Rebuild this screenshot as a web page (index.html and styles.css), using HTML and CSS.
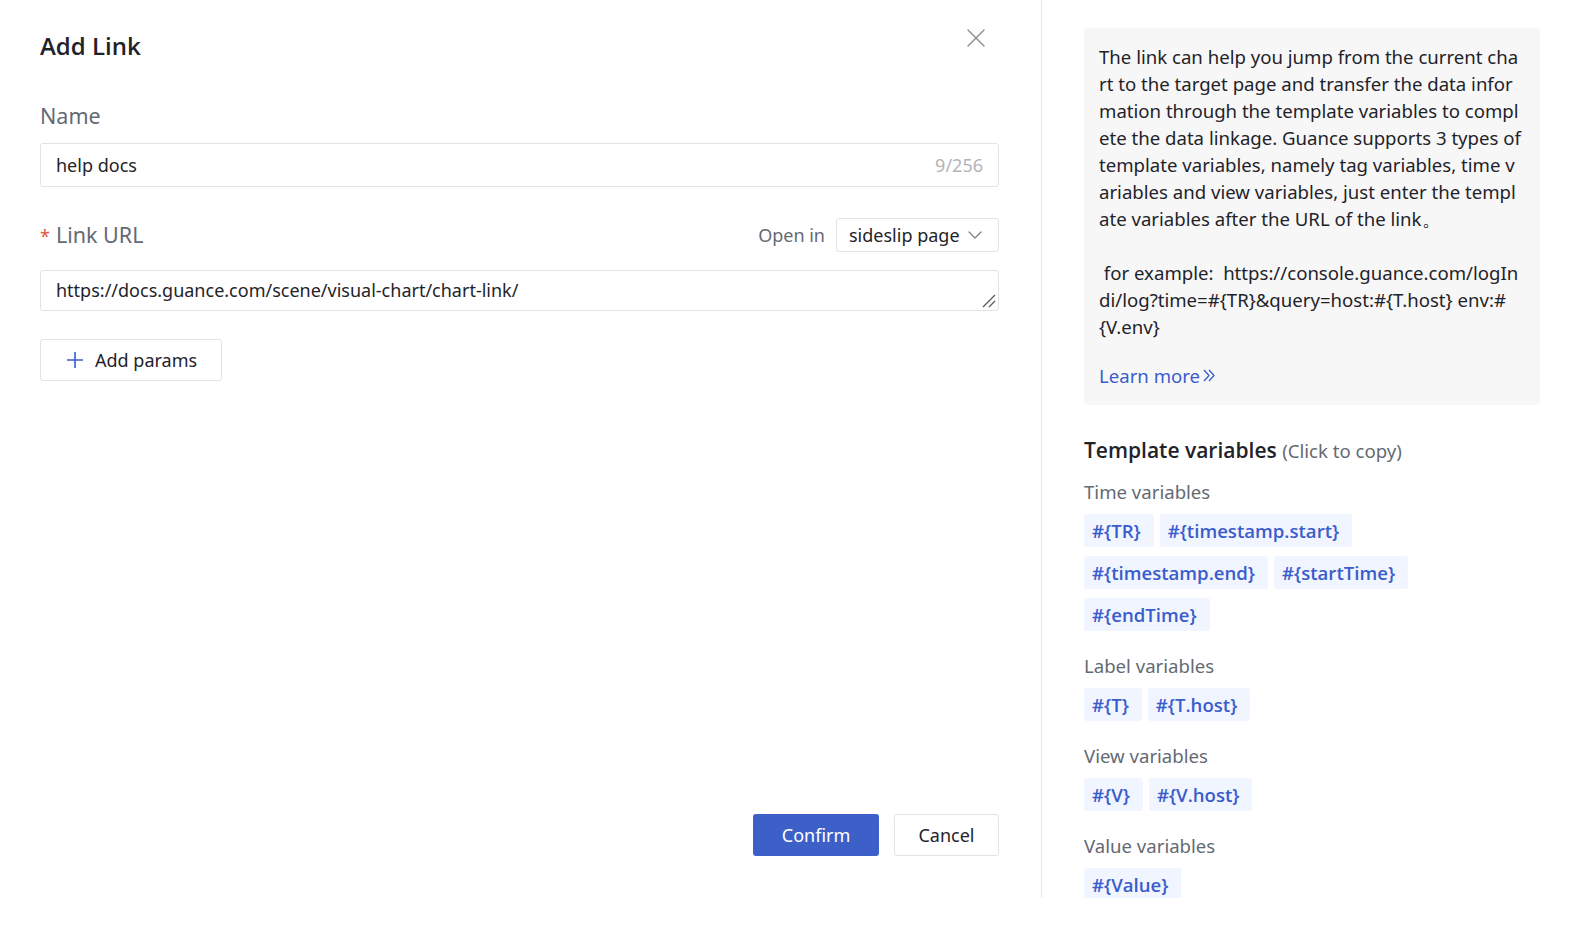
FILE: index.html
```html
<!DOCTYPE html>
<html lang="en">
  <head>
    <meta charset="UTF-8" />
    <meta name="viewport" content="width=device-width, initial-scale=1.0" />
    <title>Add Link</title>
    <link rel="stylesheet" href="styles.css">
  </head>
  <body>
    <div class="link-dialog">
      <!-- Form side -->
      <div class="form-side">
        <div class="form-header">
          <h2 class="form-title">Add Link</h2>
          <button class="close-button" type="button">
            <svg width="18" height="18" viewBox="0 0 18 18" fill="none" stroke="currentColor">
              <path stroke-width="1.4" stroke-linecap="round" d="M1 1L17 17M17 1L1 17" />
            </svg>
          </button>
        </div>

        <div class="form-body">
          <label class="field-label" for="link-name">Name</label>
          <div class="text-input">
            <input type="text" id="link-name" value="help docs" />
            <span class="counter">9/256</span>
          </div>

          <div class="url-row">
            <label class="field-label" for="link-url"><span class="required">*</span>Link URL</label>
            <div class="open-in">
              <span class="open-in-label">Open in</span>
              <div class="select">
                <span>sideslip page</span>
                <svg width="14" height="8" viewBox="0 0 14 8" fill="none" stroke="currentColor">
                  <path stroke-width="1.3" stroke-linecap="round" stroke-linejoin="round" d="M1 1l6 6 6-6" />
                </svg>
              </div>
            </div>
          </div>
          <div class="url-field">
            <textarea id="link-url" class="url-input" rows="1">https://docs.guance.com/scene/visual-chart/chart-link/</textarea>
            <svg class="resize-grip" width="14" height="14" viewBox="0 0 14 14" stroke="#5f5f5f">
              <path stroke-width="1.4" d="M13 1L1 13M13 7L7 13" />
            </svg>
          </div>

          <button class="btn btn-add" type="button">
            <svg width="16" height="16" viewBox="0 0 16 16" fill="none" stroke="currentColor">
              <path stroke-width="1.6" d="M8 0V16M0 8H16" />
            </svg>
            Add params
          </button>
        </div>

        <div class="form-actions">
          <button class="btn btn-primary" type="button">Confirm</button>
          <button class="btn btn-secondary" type="button">Cancel</button>
        </div>
      </div>

      <!-- Help side -->
      <div class="help-side">
        <div class="help-box">
          <p>The link can help you jump from the current chart to the target page and transfer the data information through the template variables to complete the data linkage. Guance supports 3 types of template variables, namely tag variables, time variables and view variables, just enter the template variables after the URL of the link。</p>
          <p>&nbsp;for example:&nbsp; https://console.guance.com/logIndi/log?time=#{TR}&amp;query=host:#{T.host} env:#{V.env}</p>
          <a class="learn-more" href="#">Learn more
            <svg width="12" height="13" viewBox="0 0 12 13" fill="none" stroke="currentColor">
              <path stroke-width="1.3" stroke-linejoin="round" d="M1 1l5 5.5-5 5.5M6 1l5 5.5-5 5.5" />
            </svg>
          </a>
        </div>

        <h3 class="vars-title">Template variables <span>(Click to copy)</span></h3>

        <div class="var-group">
          <div class="var-label">Time variables</div>
          <div class="var-tags">
            <span class="tag">#{TR}</span>
            <span class="tag">#{timestamp.start}</span>
            <span class="tag">#{timestamp.end}</span>
            <span class="tag">#{startTime}</span>
            <span class="tag">#{endTime}</span>
          </div>
        </div>

        <div class="var-group">
          <div class="var-label">Label variables</div>
          <div class="var-tags">
            <span class="tag">#{T}</span>
            <span class="tag">#{T.host}</span>
          </div>
        </div>

        <div class="var-group">
          <div class="var-label">View variables</div>
          <div class="var-tags">
            <span class="tag">#{V}</span>
            <span class="tag">#{V.host}</span>
          </div>
        </div>

        <div class="var-group">
          <div class="var-label">Value variables</div>
          <div class="var-tags">
            <span class="tag">#{Value}</span>
          </div>
        </div>
      </div>
    </div>
  </body>
</html>
```

FILE: styles.css
```css
/* Reset and base styles */
* {
  margin: 0;
  padding: 0;
  box-sizing: border-box;
  font-family: "Noto Sans", "Open Sans", sans-serif;
}

body {
  background-color: white;
  color: #1f2329;
  font-size: 18px;
  line-height: 27px;
}

.link-dialog {
  display: flex;
  height: 898px;
}

/* Form side */
.form-side {
  width: 1042px;
  flex-shrink: 0;
  border-right: 1px solid #e6e6e6;
  padding: 30px 42px 42px 40px;
  display: flex;
  flex-direction: column;
}

.form-header {
  display: flex;
  justify-content: space-between;
  align-items: flex-start;
}

.form-title {
  font-family: "Open Sans", "Noto Sans", sans-serif;
  font-size: 24px;
  line-height: 32px;
  font-weight: 600;
  color: #1f2329;
}

.close-button {
  background: none;
  border: none;
  cursor: pointer;
  color: #8c8c8c;
  margin: -1px 14px 0 0;
  display: flex;
}

.form-body {
  margin-top: 40px;
  display: flex;
  flex-direction: column;
  align-items: flex-start;
}

.field-label {
  display: block;
  font-size: 21.5px;
  line-height: 27px;
  color: #646a73;
}

.required {
  color: #e5553a;
  font-size: 18px;
  margin-right: 6px;
}

.text-input {
  margin-top: 14px;
  width: 100%;
  height: 44px;
  border: 1px solid #e1e3e6;
  border-radius: 3px;
  display: flex;
  align-items: center;
  padding: 0 15px;
}

.text-input input {
  flex: 1;
  border: none;
  outline: none;
  font-size: 18px;
  color: #1f2329;
  background: none;
}

.counter {
  color: #b1b4b9;
}

.url-row {
  margin-top: 31px;
  width: 100%;
  display: flex;
  justify-content: space-between;
  align-items: center;
}

.open-in {
  display: flex;
  align-items: center;
  gap: 11px;
}

.open-in-label {
  color: #646a73;
}

.select {
  width: 163px;
  height: 34px;
  border: 1px solid #e1e3e6;
  border-radius: 3px;
  display: flex;
  align-items: center;
  justify-content: space-between;
  padding: 0 16px 0 12px;
}

.select svg {
  color: #7d838c;
}

.url-field {
  position: relative;
  margin-top: 18px;
  width: 100%;
  display: flex;
}

.url-input {
  width: 100%;
  height: 41px;
  border: 1px solid #e1e3e6;
  border-radius: 3px;
  padding: 6px 15px;
  font-size: 18px;
  line-height: 27px;
  color: #1f2329;
  resize: none;
  outline: none;
  overflow: hidden;
}

.resize-grip {
  position: absolute;
  right: 3px;
  bottom: 3px;
  pointer-events: none;
}

/* Buttons */
.btn {
  height: 42px;
  border-radius: 3px;
  font-size: 18px;
  cursor: pointer;
  display: flex;
  align-items: center;
  justify-content: center;
}

.btn-add {
  margin-top: 28px;
  padding: 0 24px 0 26px;
  gap: 12px;
  background: white;
  border: 1px solid #e1e3e6;
  color: #1f2329;
}

.btn-add svg {
  color: #3a5ccc;
}

.form-actions {
  margin-top: auto;
  display: flex;
  justify-content: flex-end;
  gap: 15px;
}

.btn-primary {
  width: 126px;
  background-color: #3d5fc8;
  border: none;
  color: white;
}

.btn-secondary {
  width: 105px;
  background-color: white;
  border: 1px solid #e1e3e6;
  color: #1f2329;
}

/* Help side */
.help-side {
  flex: 1;
  padding: 28px 40px 0 42px;
  font-size: 18.6px;
}

.help-box {
  background-color: #f7f7f8;
  border-radius: 4px;
  padding: 15px 17px 16px 15px;
  word-break: break-all;
}

.help-box p + p {
  margin-top: 27px;
}

.learn-more {
  display: inline-flex;
  align-items: center;
  gap: 3px;
  margin-top: 22px;
  color: #3a5ccc;
  text-decoration: none;
}

.vars-title {
  margin-top: 32px;
  font-family: "Open Sans", "Noto Sans", sans-serif;
  font-size: 21px;
  line-height: 27px;
  font-weight: 600;
}

.vars-title span {
  font-family: "Noto Sans", sans-serif;
  font-size: 18.6px;
  font-weight: 400;
  color: #646a73;
}

.var-group {
  margin-top: 21px;
}

.vars-title + .var-group {
  margin-top: 14px;
}

.var-label {
  color: #646a73;
}

.var-tags {
  margin-top: 9px;
  display: flex;
  flex-wrap: wrap;
  row-gap: 9px;
}

.tag {
  height: 33px;
  line-height: 33px;
  padding: 0 13px 0 8px;
  margin-right: 6px;
  border-radius: 3px;
  background-color: #f0f5ff;
  color: #3a5ccc;
  font-family: "Open Sans", "Noto Sans", sans-serif;
  font-weight: 600;
  cursor: pointer;
}
```
